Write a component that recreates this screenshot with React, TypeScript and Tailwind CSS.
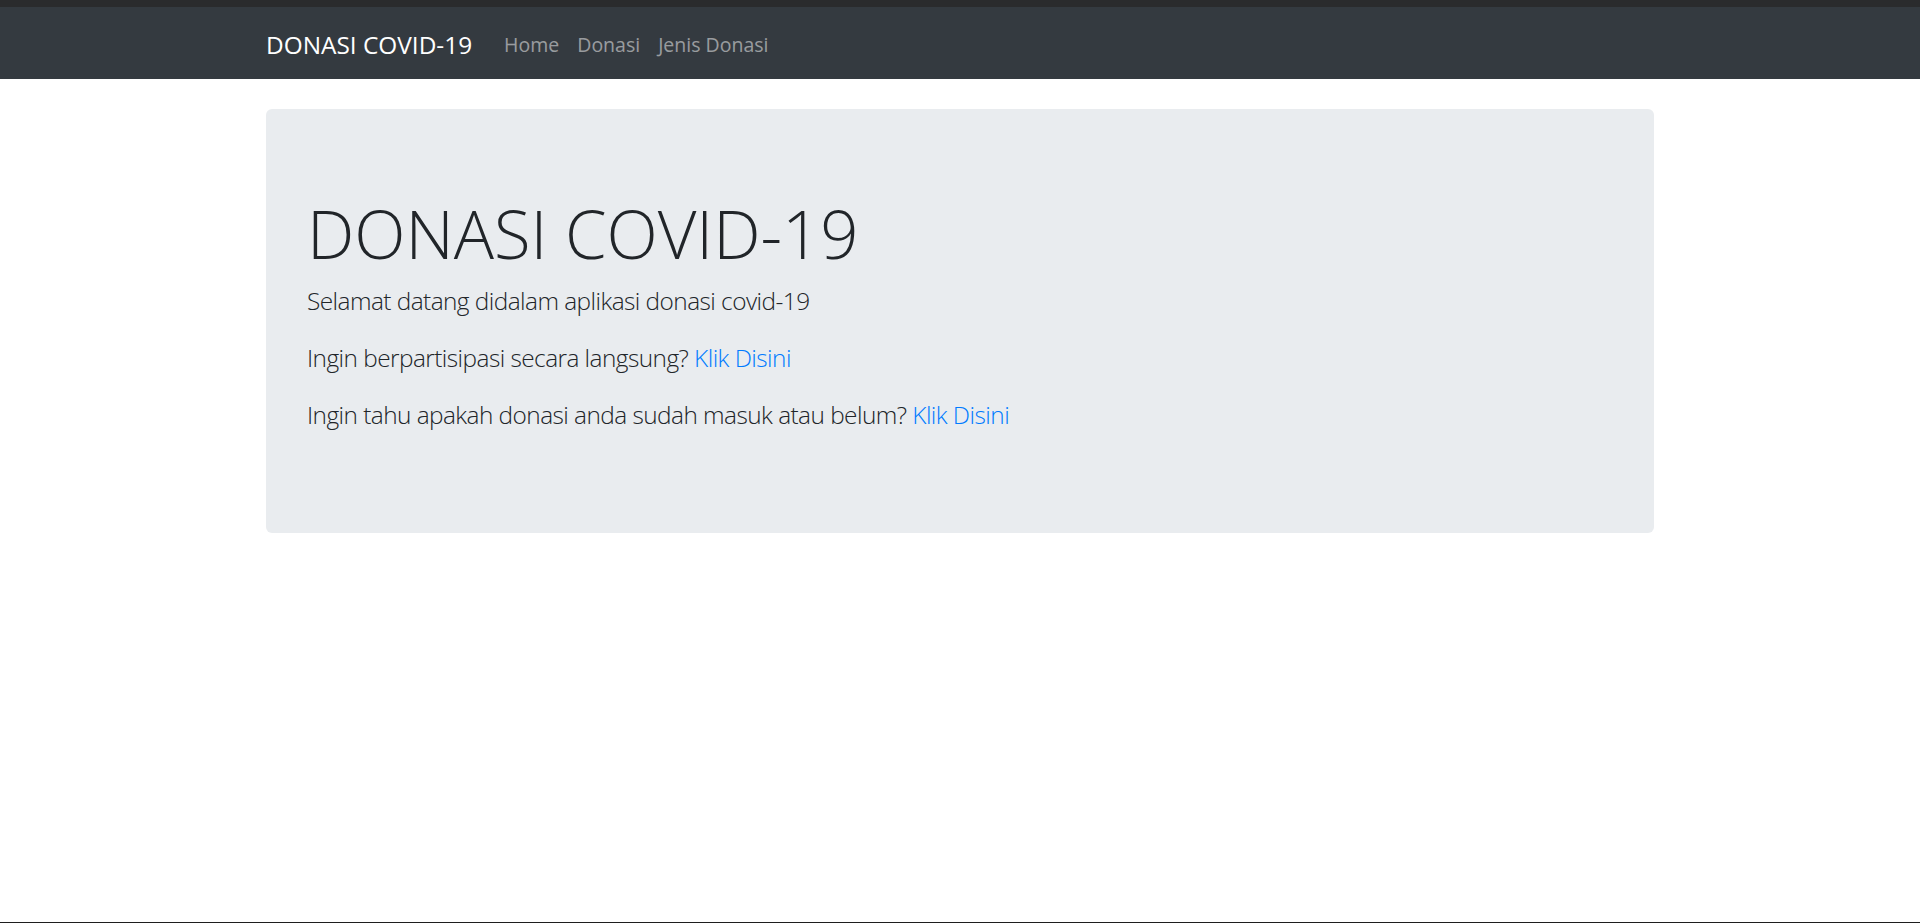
const links = ["Home", "Donasi", "Jenis Donasi"];

const App = () => {
  return (
    <div className="flex h-[923px] flex-col bg-white font-['Open_Sans',sans-serif] text-[#212529]">
      {/* window strip */}
      <div className="h-[7px] bg-[#2a2b2d]" />

      {/* Navbar */}
      <nav className="flex h-[72px] items-center bg-[#343a40] pt-[4px]">
        <div className="mx-auto flex w-[1388px] items-center">
          <a className="mr-[23px] text-[24.4px] text-white">DONASI COVID-19</a>
          <ul className="flex">
            {links.map((link) => (
              <li key={link} className="px-[9px] text-[19.5px] text-white/50">
                {link}
              </li>
            ))}
          </ul>
        </div>
      </nav>

      {/* Jumbotron */}
      <main className="flex-1">
        <div className="mx-auto mt-[30px] w-[1388px] rounded-[6px] bg-[#e9ecef] px-[41px] pt-[84px] pb-[80px]">
          <h1 className="mb-[10px] text-[67px] font-light leading-[1.2]">DONASI COVID-19</h1>
          <p className="mb-[20px] text-[24.4px] font-light leading-[1.5] tracking-[-0.55px]">
            Selamat datang didalam aplikasi donasi covid-19
          </p>
          <p className="mb-[20px] text-[24.4px] font-light leading-[1.5] tracking-[-0.55px]">
            Ingin berpartisipasi secara langsung? <a className="text-[#007bff]">Klik Disini</a>
          </p>
          <p className="mb-[20px] text-[24.4px] font-light leading-[1.5] tracking-[-0.55px]">
            Ingin tahu apakah donasi anda sudah masuk atau belum?{" "}
            <a className="text-[#007bff]">Klik Disini</a>
          </p>
        </div>
      </main>

      <div className="h-[1px] bg-[#1e1e1e]" />
    </div>
  );
};

export default App;
